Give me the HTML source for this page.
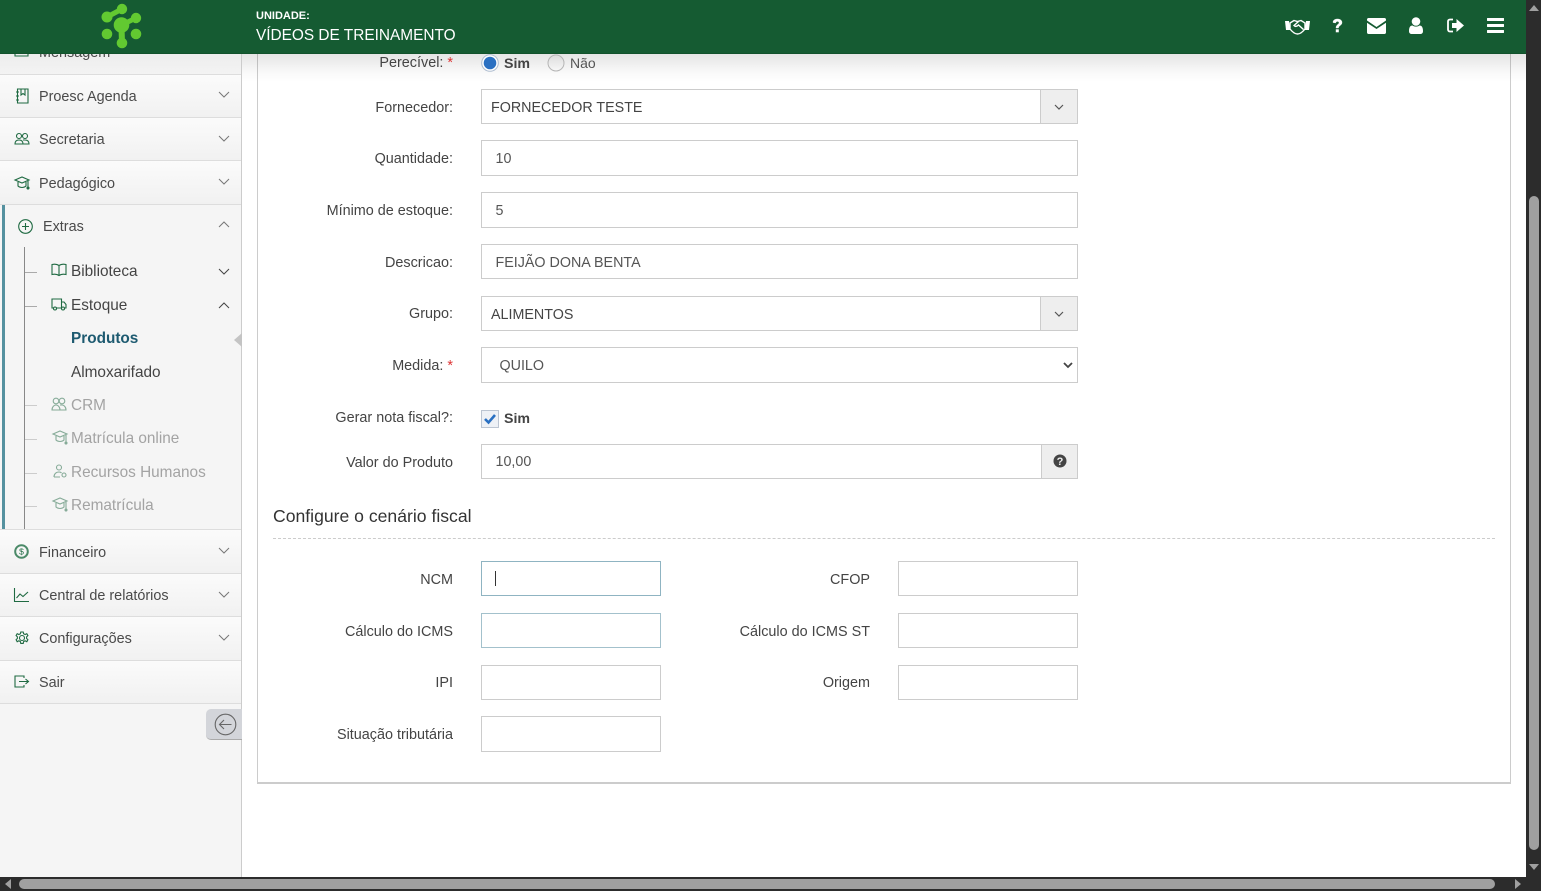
<!DOCTYPE html>
<html><head><meta charset="utf-8"><style>
*{box-sizing:border-box}
html,body{margin:0;padding:0;width:1541px;height:891px;overflow:hidden;background:#fff;font-family:"Liberation Sans",sans-serif;color:#444;font-size:14px}
.a{position:absolute}
.row{position:absolute;left:0;width:241px;background:linear-gradient(#fbfbfb,#f1f1f1);border-bottom:1px solid #ddd}
.m{position:absolute;left:39px;font-size:14.4px;color:#4a4a4a;line-height:16px;white-space:nowrap}
.s{position:absolute;left:71px;font-size:15.35px;color:#444;line-height:18px;white-space:nowrap}
.g{color:#a3a3a3}
.l{position:absolute;text-align:right;font-size:14.4px;color:#444;line-height:16px;white-space:nowrap}
.i{position:absolute;background:#fff;border:1px solid #ccc;font-size:14.3px;color:#555;line-height:37px;padding-left:13.500px;white-space:nowrap}
.ad{position:absolute;background:#eee;border:1px solid #ccc;border-left:1px solid #ccc}
svg{position:absolute;overflow:visible}
.ic{fill:none;stroke:#1f6a42;stroke-width:1.1}
.ig{fill:none;stroke:#86ab98;stroke-width:1.1}
.ch{fill:none;stroke:#777;stroke-width:1}
.t{position:absolute;height:1px;background:#aaa;left:25px;width:12px}
</style></head><body>

<!-- sidebar -->
<div class="a" style="left:0;top:54px;width:242px;height:823px;background:#f5f5f5;border-right:1px solid #ccc"></div>
<div class="row" style="top:30px;height:45px;background:linear-gradient(#e6e6e6,#f3f3f3)"></div>
<div class="m" style="top:45px">Mensagem</div>
<svg class="ic" style="left:14px;top:45px" width="16" height="14"><path d="M1 1h13v10H1z"/></svg>
<div class="row" style="top:75px;height:43px"></div>
<div class="row" style="top:118px;height:43px"></div>
<div class="row" style="top:161px;height:44px"></div>
<div class="a" style="left:0;top:205px;width:241px;height:325px;background:#f5f5f5;border-bottom:1px solid #ddd"></div>
<div class="a" style="left:2px;top:205px;width:3px;height:324px;background:#55919f"></div>
<div class="a" style="left:24px;top:247px;width:1px;height:282px;background:#888"></div>
<div class="row" style="top:530px;height:44px"></div>
<div class="row" style="top:574px;height:43px"></div>
<div class="row" style="top:617px;height:44px"></div>
<div class="row" style="top:661px;height:43px"></div>

<svg class="ic" style="left:15px;top:88px" width="14" height="16"><path d="M2.500 1h10.500v14H2.500zM6 1v6l2-1.500L10 7V1M1 4h3M1 8h3M1 12h3"/></svg>
<div class="m" style="top:89px">Proesc Agenda</div>
<svg class="ic" style="left:14px;top:133px" width="16" height="12"><circle cx="5" cy="3" r="2.500"/><circle cx="11" cy="3" r="2.500"/><path d="M1 11c0-3 2-4 4-4s4 1 4 4zM9 7h2c2 0 4 1 4 4H9"/></svg>
<div class="m" style="top:132px">Secretaria</div>
<svg class="ic" style="left:14px;top:176px" width="16" height="14"><path d="M1 4l7-3 7 3-7 3zM4 6v4c2 2 6 2 8 0V6M14 5v6" /><circle cx="14" cy="12" r="1" fill="#1f6a42"/></svg>
<div class="m" style="top:176px">Pedagógico</div>
<svg class="ic" style="left:18px;top:219px" width="15" height="15"><circle cx="7.500" cy="7.500" r="6.800"/><path d="M7.500 4v7M4 7.500h7"/></svg>
<div class="m" style="left:43px;top:219px">Extras</div>

<div class="t" style="top:272px"></div>
<div class="t" style="top:306px"></div>
<div class="t" style="top:405px;background:#ccc"></div>
<div class="t" style="top:439px;background:#ccc"></div>
<div class="t" style="top:473px;background:#ccc"></div>
<div class="t" style="top:506px;background:#ccc"></div>

<svg class="ic" style="left:51px;top:263px" width="16" height="14"><path d="M8 2.500C6 1 3 1 1 1.500v10c2-.5 5-.5 7 1 2-1.500 5-1.500 7-1v-10C13 1 10 1 8 2.500zM8 2.500v10"/></svg>
<div class="s" style="top:263px">Biblioteca</div>
<svg class="ic" style="left:51px;top:298px" width="16" height="13"><path d="M1 1h9.500v9H1zM10.500 4h2.500l2 2.500V10h-4.500"/><circle cx="4" cy="10.500" r="1.500" fill="#f5f5f5"/><circle cx="12" cy="10.500" r="1.500" fill="#f5f5f5"/></svg>
<div class="s" style="top:297px">Estoque</div>
<div class="s" style="top:330px;font-weight:bold;color:#1d5a70">Produtos</div>
<div class="s" style="top:364px">Almoxarifado</div>
<svg class="ig" style="left:51px;top:397px" width="16" height="14"><circle cx="5" cy="4" r="2.800"/><circle cx="11" cy="4" r="2.800"/><path d="M1 13c0-3 2-5 4-5s4 2 4 5zM9 8h2c2 0 4 2 4 5H9"/></svg>
<div class="s g" style="top:397px">CRM</div>
<svg class="ig" style="left:52px;top:430px" width="16" height="15"><path d="M1 4l7-3 7 3-7 3zM4 6v4c2 2 6 2 8 0V6M14 5v7"/><circle cx="14" cy="13" r="1" fill="#86ab98"/></svg>
<div class="s g" style="top:430px">Matrícula online</div>
<svg class="ig" style="left:53px;top:464px" width="14" height="14"><circle cx="6" cy="3.500" r="2.500"/><path d="M1 13c0-3 2-5 5-5 1 0 2 .3 2.500 1M1 13h6"/><circle cx="11" cy="11" r="2"/></svg>
<div class="s g" style="top:464px">Recursos Humanos</div>
<svg class="ig" style="left:52px;top:497px" width="16" height="15"><path d="M1 4l7-3 7 3-7 3zM4 6v4c2 2 6 2 8 0V6M14 5v7"/><circle cx="14" cy="13" r="1" fill="#86ab98"/></svg>
<div class="s g" style="top:497px">Rematrícula</div>

<svg class="ic" style="left:14px;top:544px" width="15" height="15"><circle cx="7.500" cy="7.500" r="6.300" stroke-width="2" stroke="#4b8a68"/><text x="7.500" y="10.500" font-size="8.500" text-anchor="middle" fill="#1f6a42" stroke="none" font-family="Liberation Sans">$</text></svg>
<div class="m" style="top:545px">Financeiro</div>
<svg class="ic" style="left:14px;top:588px" width="15" height="14"><path d="M.5 0v13.500H15M2.500 10l3.500-4 3 2.500L14 4"/></svg>
<div class="m" style="top:588px">Central de relatórios</div>
<svg class="ic" style="left:15px;top:631px" width="14" height="14" stroke-width="1"><circle cx="7" cy="7" r="2.500"/><path d="M5.800 1h2.400l.4 1.800 1.500.7 1.700-.8 1.100 1.800-1.300 1.300v1.600l1.300 1.300-1.100 2-1.700-.9-1.500.8-.4 1.800H5.800l-.4-1.800-1.500-.8-1.700.9-1.100-2 1.300-1.300V5.800L1.100 4.500l1.100-1.800 1.700.8 1.500-.7z"/></svg>
<div class="m" style="top:631px">Configurações</div>
<svg class="ic" style="left:14px;top:675px" width="16" height="13"><path d="M10 3V1H1v11h9v-2M5 6.500h9M11.500 4l3 2.500-3 2.500"/></svg>
<div class="m" style="top:675px">Sair</div>

<!-- chevrons -->
<svg class="ch" style="left:218px;top:91px" width="12" height="7"><path d="M1 1l5 5 5-5"/></svg>
<svg class="ch" style="left:218px;top:135px" width="12" height="7"><path d="M1 1l5 5 5-5"/></svg>
<svg class="ch" style="left:218px;top:178px" width="12" height="7"><path d="M1 1l5 5 5-5"/></svg>
<svg class="ch" style="left:218px;top:221px" width="12" height="7"><path d="M1 6l5-5 5 5"/></svg>
<svg class="ch" style="left:218px;top:268px;stroke:#444" width="12" height="7"><path d="M1 1l5 5 5-5"/></svg>
<svg class="ch" style="left:218px;top:302px;stroke:#444" width="12" height="7"><path d="M1 6l5-5 5 5"/></svg>
<svg class="ch" style="left:218px;top:547px" width="12" height="7"><path d="M1 1l5 5 5-5"/></svg>
<svg class="ch" style="left:218px;top:591px" width="12" height="7"><path d="M1 1l5 5 5-5"/></svg>
<svg class="ch" style="left:218px;top:634px" width="12" height="7"><path d="M1 1l5 5 5-5"/></svg>

<svg style="left:234px;top:333px" width="8" height="14"><path d="M8 0v14L0 7z" fill="#c4c4c4"/></svg>
<div class="a" style="left:206px;top:709px;width:36px;height:31px;background:#d3d5da;border-radius:5px 0 0 5px;border-bottom:1px solid #aaa"></div>
<svg style="left:214px;top:713px" width="23" height="23" fill="none" stroke="#666" stroke-width="1.100"><circle cx="11.500" cy="11.500" r="10.300"/><path d="M5.500 11.500h12M10 7l-4.500 4.500L10 16"/></svg>

<!-- card -->
<div class="a" style="left:257px;top:40px;width:1254px;height:744px;background:#fff;border:1px solid #ccc;border-bottom:2px solid #ccc"></div>
<div class="a" style="left:242px;top:54px;width:1284px;height:28px;background:linear-gradient(rgba(0,0,0,.10),rgba(0,0,0,.02) 70%,rgba(0,0,0,0))"></div>

<div class="l" style="right:1088px;top:55px">Perecível: <span style="color:#d33">*</span></div>
<svg style="left:481px;top:54px" width="18" height="18"><circle cx="9" cy="9" r="8.300" fill="#fff" stroke="#aebdd0"/><circle cx="9" cy="9" r="6.300" fill="#2a70c2"/></svg>
<div class="a" style="left:504px;top:56px;font-weight:bold;line-height:16px;font-size:14.2px">Sim</div>
<svg style="left:547px;top:54px" width="18" height="18"><defs><linearGradient id="rg" x1="0" y1="0" x2="0" y2="1"><stop offset="0" stop-color="#dcdcdc"/><stop offset="1" stop-color="#f8f8f8"/></linearGradient></defs><circle cx="9" cy="9" r="8" fill="url(#rg)" stroke="#b5b5b5"/></svg>
<div class="a" style="left:570px;top:55px;line-height:16px;color:#555">Não</div>

<div class="l" style="right:1088px;top:100px">Fornecedor:</div>
<div class="i" style="left:481px;top:89px;width:560px;height:35px;padding-left:9px;color:#444">FORNECEDOR TESTE</div>
<div class="ad" style="left:1040px;top:89px;width:38px;height:35px"></div>
<svg style="left:1054px;top:104px" width="10" height="6" fill="none" stroke="#555" stroke-width="1.200"><path d="M1 1l4 4 4-4"/></svg>

<div class="l" style="right:1088px;top:151px">Quantidade:</div>
<div class="i" style="left:481px;top:140px;width:597px;height:36px">10</div>
<div class="l" style="right:1088px;top:203px">Mínimo de estoque:</div>
<div class="i" style="left:481px;top:192px;width:597px;height:36px">5</div>
<div class="l" style="right:1088px;top:255px">Descricao:</div>
<div class="i" style="left:481px;top:244px;width:597px;height:35px">FEIJÃO DONA BENTA</div>

<div class="l" style="right:1088px;top:306px">Grupo:</div>
<div class="i" style="left:481px;top:296px;width:560px;height:35px;padding-left:9px;color:#444">ALIMENTOS</div>
<div class="ad" style="left:1040px;top:296px;width:38px;height:35px"></div>
<svg style="left:1054px;top:311px" width="10" height="6" fill="none" stroke="#555" stroke-width="1.200"><path d="M1 1l4 4 4-4"/></svg>

<div class="l" style="right:1088px;top:358px">Medida: <span style="color:#d33">*</span></div>
<div class="i" style="left:481px;top:347px;width:597px;height:36px;padding-left:17.500px;line-height:36px">QUILO</div>
<svg style="left:1063px;top:362px" width="10" height="7" fill="none" stroke="#444" stroke-width="1.800"><path d="M1 1l4 4 4-4"/></svg>

<div class="l" style="right:1088px;top:410px">Gerar nota fiscal?:</div>
<div class="a" style="left:481px;top:410px;width:18px;height:18px;background:#eef1f6;border:1px solid #bcc5d2"></div>
<svg style="left:483px;top:412px" width="14" height="14" fill="none" stroke="#2a70c2" stroke-width="2.600"><path d="M2 7l3.500 3.500L12 3"/></svg>
<div class="a" style="left:504px;top:411px;font-weight:bold;line-height:16px;font-size:14.2px">Sim</div>

<div class="l" style="right:1088px;top:455px">Valor do Produto</div>
<div class="i" style="left:481px;top:444px;width:561px;height:35px;line-height:35px">10,00</div>
<div class="ad" style="left:1041px;top:444px;width:37px;height:35px"></div>
<svg style="left:1053px;top:454px" width="14" height="14"><circle cx="7" cy="7" r="6.500" fill="#444"/><text x="7" y="11" font-size="11" font-weight="bold" text-anchor="middle" fill="#eee" font-family="Liberation Sans">?</text></svg>

<div class="a" style="left:273px;top:506px;font-size:17.6px;line-height:20px;color:#333">Configure o cenário fiscal</div>
<div class="a" style="left:273px;top:538px;width:1222px;border-top:1px dashed #ccc"></div>

<div class="l" style="right:1088px;top:572px">NCM</div>
<div class="i" style="left:481px;top:561px;width:180px;height:35px;border-color:#8fb4c2"></div>
<div class="a" style="left:495px;top:571px;width:1px;height:15px;background:#333"></div>
<div class="l" style="right:671px;top:572px">CFOP</div>
<div class="i" style="left:898px;top:561px;width:180px;height:35px"></div>
<div class="l" style="right:1088px;top:624px">Cálculo do ICMS</div>
<div class="i" style="left:481px;top:613px;width:180px;height:35px;border-color:#a3c1cc"></div>
<div class="l" style="right:671px;top:624px">Cálculo do ICMS ST</div>
<div class="i" style="left:898px;top:613px;width:180px;height:35px"></div>
<div class="l" style="right:1088px;top:675px">IPI</div>
<div class="i" style="left:481px;top:665px;width:180px;height:35px"></div>
<div class="l" style="right:671px;top:675px">Origem</div>
<div class="i" style="left:898px;top:665px;width:180px;height:35px"></div>
<div class="l" style="right:1088px;top:727px">Situação tributária</div>
<div class="i" style="left:481px;top:716px;width:180px;height:36px"></div>

<!-- header -->
<div class="a" style="left:0;top:0;width:1526px;height:54px;background:#155b32;border-bottom:1px solid #12522c"></div>
<svg style="left:100px;top:2px" width="44" height="50"><g fill="none" stroke="#62c931" stroke-width="5" stroke-linecap="round"><path d="M7 15L22 7M21.500 23L36 16"/><path d="M21.500 25L22 41" stroke-width="6"/></g><g fill="#62c931"><circle cx="22" cy="7" r="5.200"/><circle cx="7" cy="15" r="5.500"/><circle cx="36" cy="16" r="5.200"/><circle cx="21.500" cy="23" r="7.800"/><circle cx="7" cy="32" r="5.300"/><circle cx="36" cy="32" r="5.300"/><circle cx="22" cy="41" r="5.300"/></g></svg>
<div class="a" style="left:256px;top:10px;font-size:11px;font-weight:bold;color:#fff;line-height:13px">UNIDADE:</div>
<div class="a" style="left:256px;top:26px;font-size:15.4px;color:#fff;line-height:18px;margin-top:0.500px">VÍDEOS DE TREINAMENTO</div>

<svg style="left:1285px;top:17px" width="25" height="18"><path d="M0 4h4l1 9H1zM25 4h-4l-1 9h4z" fill="#fff"/><path d="M5 6l4-2.500 3.500 1L16 3.500 20 6v6c-2 2.500-5 5-7.500 5S7 14.500 5 12z" fill="none" stroke="#fff" stroke-width="1.400"/><path d="M13.500 4.500L9 8.500c1.500 1.500 3 1 4.500-.5l5 4.500" fill="none" stroke="#fff" stroke-width="1.400"/></svg>
<svg style="left:1332px;top:18px" width="11" height="15"><path d="M1 4.500C1 2 3 1 5.500 1S10 2.300 10 4.500c0 3-3.500 3-3.500 5.500H4c0-3.500 3-3.500 3-5.300C7 3.800 6.300 3.400 5.500 3.400S4 3.900 3.600 5z" fill="#fff" stroke="#fff" stroke-width=".4"/><rect x="3.800" y="11.300" width="3" height="3" fill="#fff"/></svg>
<svg style="left:1367px;top:18px" width="19" height="16"><path d="M0 1.500C0 .7.700 0 1.500 0h16c.8 0 1.500.7 1.500 1.500v1L9.500 9 0 2.500zM0 4.800L9.500 11 19 4.800V14.500c0 .8-.7 1.500-1.500 1.500h-16C.7 16 0 15.300 0 14.500z" fill="#fff"/></svg>
<svg style="left:1409px;top:17px" width="14" height="17"><circle cx="7" cy="4.500" r="4.300" fill="#fff"/><path d="M0 14c0-4 1.500-5.500 3.500-5.500 2 1.500 5 1.500 7 0 2 0 3.500 1.500 3.500 5.500 0 2-1 3-3 3H3c-2 0-3-1-3-3z" fill="#fff"/></svg>
<svg style="left:1447px;top:18px" width="17" height="15"><path d="M6 1.500H3C1.800 1.500 1 2.300 1 3.500v8c0 1.200.8 2 2 2h3" fill="none" stroke="#fff" stroke-width="1.800"/><path d="M9.500 1L17 7.500 9.500 14v-4H5V5h4.500z" fill="#fff"/></svg>
<svg style="left:1487px;top:18px" width="17" height="15"><rect width="17" height="3" y="0" rx=".5" fill="#fff"/><rect width="17" height="3" y="6" rx=".5" fill="#fff"/><rect width="17" height="3" y="12" rx=".5" fill="#fff"/></svg>

<!-- scrollbars -->
<div class="a" style="left:1526px;top:0;width:15px;height:891px;background:#2c2c2c"></div>
<div class="a" style="left:0;top:877px;width:1541px;height:14px;background:#2c2c2c"></div>
<div class="a" style="left:1529px;top:196px;width:10px;height:654px;background:#a0a0a0;border-radius:5px"></div>
<div class="a" style="left:19px;top:879px;width:1476px;height:10px;background:#a0a0a0;border-radius:5px"></div>
<svg style="left:1529px;top:5px" width="10" height="6"><path d="M0 6L5 0l5 6z" fill="#a0a0a0"/></svg>
<svg style="left:1529px;top:864px" width="10" height="6"><path d="M0 0l5 6 5-6z" fill="#a0a0a0"/></svg>
<svg style="left:5px;top:879px" width="6" height="10"><path d="M6 0L0 5l6 5z" fill="#a0a0a0"/></svg>
<svg style="left:1515px;top:879px" width="6" height="10"><path d="M0 0l6 5-6 5z" fill="#a0a0a0"/></svg>
</body></html>
